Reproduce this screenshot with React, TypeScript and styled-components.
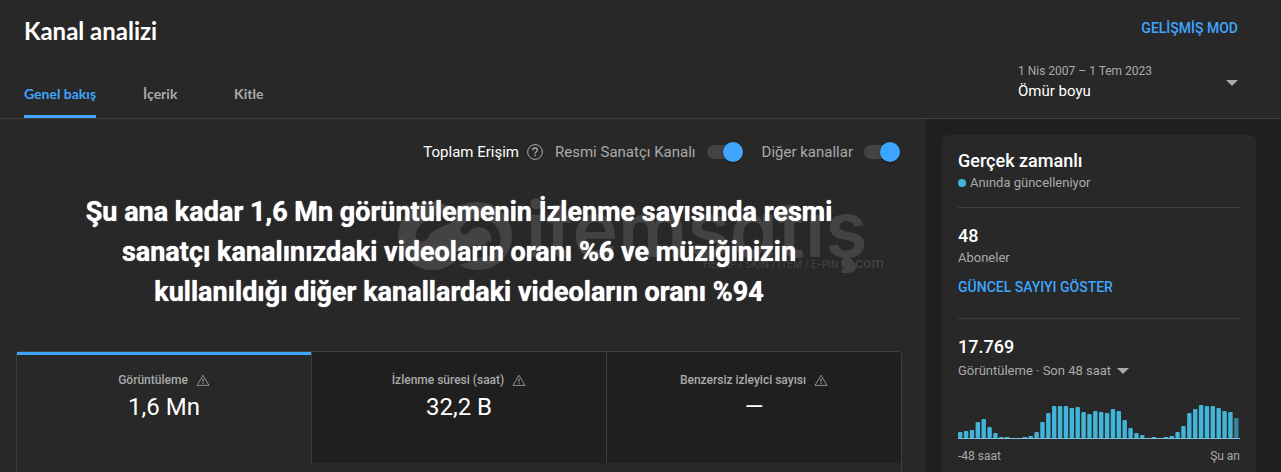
import React from "react";
import styled, { createGlobalStyle } from "styled-components";

const GlobalStyle = createGlobalStyle`
  *, *::before, *::after { box-sizing: border-box; }
  body {
    margin: 0;
    background: #282828;
    color: #fff;
    font-family: Roboto, "Liberation Sans", sans-serif;
    font-size: 13px;
    line-height: 20px;
  }
  h1, h2, h3, p { margin: 0; }
  button, select { font: inherit; color: inherit; }
`;

const colors = {
  panel: "#282828",
  sunken: "#1f1f1f",
  line: "#3e3e3e",
  muted: "#aaaaaa",
  blue: "#3ea6ff",
  chart: "#41b4d9",
  watermark: "#434343",
};

const Page = styled.div`
  display: flex;
  flex-direction: column;
  min-height: 100vh;
`;

const Header = styled.header`
  display: flex;
  justify-content: space-between;
  height: 119px;
  padding: 0 43px 0 24px;
  border-bottom: 1px solid ${colors.line};
`;

const HeaderLeft = styled.div`
  display: flex;
  flex-direction: column;
  justify-content: space-between;
`;

const HeaderRight = styled.div`
  display: flex;
  flex-direction: column;
  align-items: flex-end;
  gap: 25px;
  padding-top: 18px;
`;

const PageTitle = styled.h1`
  padding-top: 15px;
  font-family: Lato, Roboto, sans-serif;
  font-size: 24px;
  font-weight: 700;
  line-height: 32px;
`;

const Tabs = styled.nav`
  display: flex;
  gap: 47px;
`;

const Tab = styled.a<{ $active?: boolean }>`
  min-width: 44px;
  height: 36px;
  border-bottom: 3px solid ${(p) => (p.$active ? colors.blue : "transparent")};
  border-radius: 2px 2px 0 0;
  color: ${(p) => (p.$active ? colors.blue : colors.muted)};
  font-family: Lato, Roboto, sans-serif;
  font-size: 14px;
  font-weight: 700;
  line-height: 24px;
  text-decoration: none;
`;

const TextButton = styled.button`
  padding: 0;
  border: 0;
  background: none;
  color: ${colors.blue};
  font-size: 14px;
  font-weight: 500;
  line-height: 20px;
  cursor: pointer;
`;

const PeriodButton = styled.button`
  display: flex;
  align-items: center;
  justify-content: space-between;
  width: 220px;
  padding: 0;
  border: 0;
  background: none;
  text-align: left;
  cursor: pointer;
`;

const PeriodDates = styled.span`
  display: block;
  color: ${colors.muted};
  font-size: 12px;
  line-height: 16px;
`;

const PeriodName = styled.span`
  display: block;
  font-size: 15px;
  line-height: 24px;
`;

const Body = styled.div`
  display: flex;
  flex: 1;
`;

const Main = styled.main`
  flex: 1;
  display: flex;
  flex-direction: column;
  min-width: 0;
  padding: 19px 24px 0 16px;
`;

const ReachBar = styled.div`
  display: flex;
  align-items: center;
  justify-content: flex-end;
  height: 28px;
  padding-right: 2px;
  color: ${colors.muted};
  font-size: 15px;
`;

const ReachTitle = styled.span`
  margin-right: 8px;
  color: #fff;
`;

const HelpButton = styled.button`
  display: flex;
  margin-right: 12px;
  padding: 0;
  border: 0;
  background: none;
  cursor: pointer;
`;

const ToggleLabel = styled.label`
  display: flex;
  align-items: center;
  gap: 11px;
  cursor: pointer;

  & + & { margin-left: 19px; }
`;

const Toggle = styled.input`
  display: flex;
  align-items: center;
  appearance: none;
  width: 36px;
  height: 14px;
  margin: 0;
  border-radius: 7px;
  background: #434343;
  cursor: pointer;

  &::before {
    content: "";
    width: 20px;
    height: 20px;
    flex: none;
    border-radius: 50%;
    background: #909090;
  }
  &:checked { justify-content: flex-end; }
  &:checked::before {
    background: ${colors.blue};
    box-shadow: 0 1px 2px rgba(0, 0, 0, 0.4);
  }
`;

const Hero = styled.section`
  position: relative;
  padding: 26px 0 39px;
`;

const Headline = styled.h2`
  position: relative;
  max-width: 768px;
  margin: 0 auto;
  font-size: 27px;
  font-weight: 700;
  line-height: 40px;
  text-align: center;
  text-shadow: 0 0 1px #fff;
`;

const Watermark = styled.svg`
  position: absolute;
  top: 35px;
  right: 15px;
  overflow: visible;
`;

const Wordmark = styled.text`
  font-family: Inter, sans-serif;
  font-size: 77px;
  font-weight: 600;
  font-feature-settings: "cv11";
`;

const Tagline = styled.text`
  font-family: Inter, sans-serif;
  font-size: 10px;
`;

const DomainSuffix = styled.text`
  font-family: Inter, sans-serif;
  font-size: 14px;
  font-weight: 500;
`;

const MetricCard = styled.section`
  display: flex;
  flex: 1;
  align-items: flex-start;
  border: 1px solid ${colors.line};
  border-bottom: 0;
  border-radius: 4px 4px 0 0;
`;

const Metric = styled.button<{ $active?: boolean }>`
  display: flex;
  flex: 1;
  flex-direction: column;
  align-items: center;
  height: 111px;
  padding: 20px 0 0;
  border: 0;
  border-left: 1px solid ${colors.line};
  background: ${(p) => (p.$active ? colors.panel : colors.sunken)};
  box-shadow: ${(p) => (p.$active ? `inset 0 3px 0 ${colors.blue}` : "none")};
  cursor: pointer;

  &:first-child { border-left: 0; }
`;

const MetricName = styled.span`
  display: flex;
  align-items: center;
  gap: 8px;
  color: ${colors.muted};
  font-size: 12px;
  font-weight: 500;
  line-height: 16px;
`;

const MetricValue = styled.span`
  padding-top: 3px;
  font-size: 24px;
  line-height: 32px;
`;

const Sidebar = styled.aside`
  display: flex;
  width: 355px;
  padding: 16px 25px 0 16px;
  background: ${colors.sunken};
`;

const RealtimeCard = styled.section`
  flex: 1;
  padding: 14px 16px 0;
  border-radius: 6px 6px 0 0;
  background: ${colors.panel};
`;

const CardTitle = styled.h3`
  font-size: 18px;
  font-weight: 500;
  line-height: 24px;
`;

const Note = styled.p`
  display: flex;
  align-items: center;
  gap: 4px;
  color: ${colors.muted};
`;

const LiveDot = styled.span`
  width: 8px;
  height: 8px;
  border-radius: 50%;
  background: ${colors.chart};
`;

const Group = styled.div`
  margin-top: 14px;
  padding-top: 16px;
  border-top: 1px solid ${colors.line};
`;

const RangeButton = styled.button`
  display: flex;
  align-items: center;
  gap: 6px;
  padding: 2px 0 0;
  border: 0;
  background: none;
  color: ${colors.muted};
  cursor: pointer;
`;

const LinkRow = styled.div`
  display: flex;
  padding: 9px 0 7px;
`;

const Chart = styled.svg`
  display: block;
  width: 100%;
  height: 36px;
  margin-top: 23px;
`;

const Axis = styled.div`
  display: flex;
  justify-content: space-between;
  padding-top: 6px;
  color: ${colors.muted};
  font-size: 12px;
`;

const hourly = [
  6, 7, 8, 16, 19, 11, 5, 1, 1, 0, 0, 1, 2, 6, 16, 25, 32, 32, 32, 30, 31, 26, 24, 27,
  26, 25, 29, 27, 18, 10, 5, 3, 0, 1, 0, 1, 2, 6, 12, 25, 29, 33, 32, 32, 30, 27, 26, 20,
];

const Caret = () => (
  <svg width="12" height="6" viewBox="0 0 12 6" aria-hidden="true">
    <path d="M0 0h12L6 6z" fill={colors.muted} />
  </svg>
);

const WarningIcon = () => (
  <svg width="14" height="12" viewBox="0 0 14 12" fill="none" stroke={colors.muted} aria-hidden="true">
    <path d="M7 1.2 13 11.4H1z" strokeWidth="0.8" />
    <path d="M7 4.5v3.6M7 9v1.3" />
  </svg>
);

const HelpIcon = () => (
  <svg width="16" height="16" viewBox="0 0 16 16" fill="none" stroke={colors.muted} aria-hidden="true">
    <circle cx="8" cy="8" r="7.4" />
    <path d="M5.7 6.3c0-1.4 1-2.3 2.3-2.3s2.3.9 2.3 2.1c0 1.6-2.2 1.7-2.2 3.6" strokeWidth="1.3" />
    <path d="M8.1 10.8v1.4" strokeWidth="1.4" />
  </svg>
);

const BrandMark = () => (
  <Watermark width="490" height="72" viewBox="0 0 490 72" fill={colors.watermark} aria-hidden="true">
    <path d="M35 1c9 0 16 3 23 8 6-5 14-8 23-8a34 34 0 1 1 0 68c-9 0-17-3-23-8-7 5-14 8-23 8A34 34 0 1 1 35 1z" />
    <path
      d="M25 34c2-8 12-12 24-17M63 57c10-3 20-6 25-12"
      fill="none"
      stroke={colors.panel}
      strokeWidth="13"
      strokeLinecap="round"
    />
    <path
      d="M68 29a17 17 0 0 1 31 8c0 8-5 13-12 15"
      fill="none"
      stroke={colors.panel}
      strokeWidth="9"
      strokeLinecap="round"
    />
    <circle cx="83" cy="36" r="9" />
    <Wordmark x="129" y="56">itemsatış</Wordmark>
    <circle cx="450" cy="62" r="6" />
    <Tagline x="306" y="67">HESAP / SKIN / ITEM / E-PIN</Tagline>
    <DomainSuffix x="458" y="67">com</DomainSuffix>
  </Watermark>
);

const metrics = [
  { name: "Görüntüleme", value: "1,6 Mn", active: true },
  { name: "İzlenme süresi (saat)", value: "32,2 B" },
  { name: "Benzersiz izleyici sayısı", value: "—" },
];

export default function App() {
  return (
    <Page lang="tr">
      <GlobalStyle />
      <Header>
        <HeaderLeft>
          <PageTitle>Kanal analizi</PageTitle>
          <Tabs>
            <Tab href="#overview" $active>Genel bakış</Tab>
            <Tab href="#content">İçerik</Tab>
            <Tab href="#audience">Kitle</Tab>
          </Tabs>
        </HeaderLeft>
        <HeaderRight>
          <TextButton>GELİŞMİŞ MOD</TextButton>
          <PeriodButton>
            <span>
              <PeriodDates>1 Nis 2007 – 1 Tem 2023</PeriodDates>
              <PeriodName>Ömür boyu</PeriodName>
            </span>
            <Caret />
          </PeriodButton>
        </HeaderRight>
      </Header>
      <Body>
        <Main>
          <ReachBar>
            <ReachTitle>Toplam Erişim</ReachTitle>
            <HelpButton aria-label="Yardım"><HelpIcon /></HelpButton>
            <ToggleLabel>
              Resmi Sanatçı Kanalı
              <Toggle type="checkbox" defaultChecked />
            </ToggleLabel>
            <ToggleLabel>
              Diğer kanallar
              <Toggle type="checkbox" defaultChecked />
            </ToggleLabel>
          </ReachBar>
          <Hero>
            <BrandMark />
            <Headline>
              Şu ana kadar 1,6 Mn görüntülemenin İzlenme sayısında resmi sanatçı kanalınızdaki
              videoların oranı %6 ve müziğinizin kullanıldığı diğer kanallardaki videoların oranı %94
            </Headline>
          </Hero>
          <MetricCard>
            {metrics.map((m) => (
              <Metric key={m.name} $active={m.active}>
                <MetricName>{m.name}<WarningIcon /></MetricName>
                <MetricValue>{m.value}</MetricValue>
              </Metric>
            ))}
          </MetricCard>
        </Main>
        <Sidebar>
          <RealtimeCard>
            <CardTitle>Gerçek zamanlı</CardTitle>
            <Note><LiveDot />Anında güncelleniyor</Note>
            <Group>
              <CardTitle>48</CardTitle>
              <Note>Aboneler</Note>
              <LinkRow><TextButton>GÜNCEL SAYIYI GÖSTER</TextButton></LinkRow>
            </Group>
            <Group>
              <CardTitle>17.769</CardTitle>
              <RangeButton>Görüntüleme · Son 48 saat<Caret /></RangeButton>
              <Chart viewBox="0 0 282 36" preserveAspectRatio="none" role="img" aria-label="Son 48 saat">
                {hourly.map((h, i) => (
                  <rect
                    key={i}
                    x={i * 5.875}
                    y={34 - h}
                    width="4.4"
                    height={h}
                    rx={h > 2 ? 1 : 0}
                    fill={colors.chart}
                    opacity={i === hourly.length - 1 ? 0.65 : 1}
                  />
                ))}
                <rect y="34" width="282" height="1" fill="#7fc3dc" />
              </Chart>
              <Axis><span>-48 saat</span><span>Şu an</span></Axis>
            </Group>
          </RealtimeCard>
        </Sidebar>
      </Body>
    </Page>
  );
}
